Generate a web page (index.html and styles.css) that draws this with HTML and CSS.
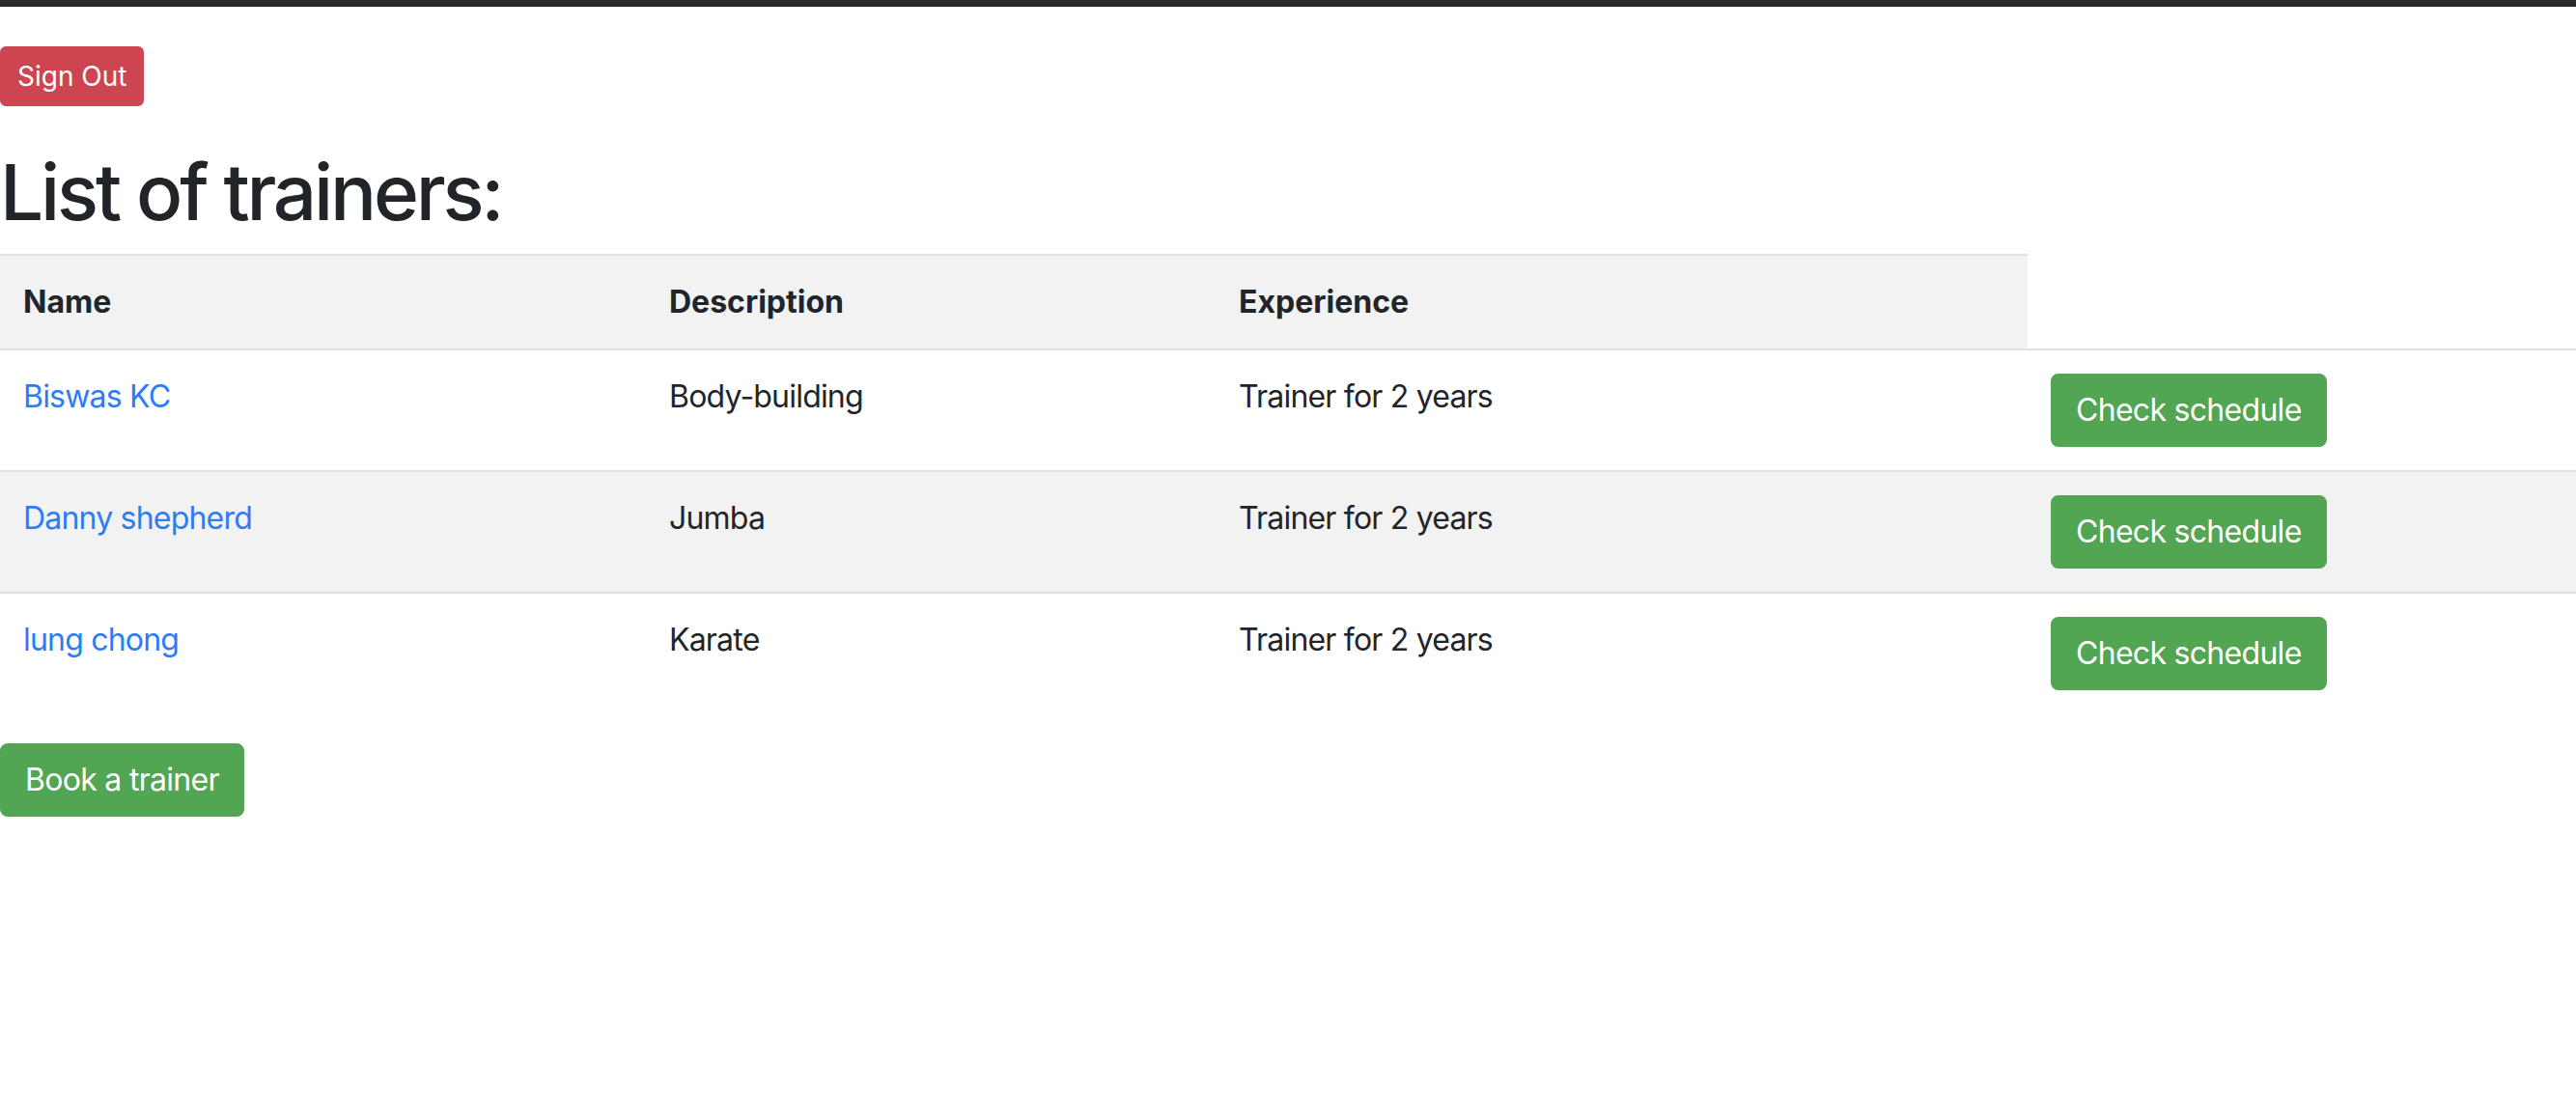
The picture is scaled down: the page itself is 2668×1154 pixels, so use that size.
FILE: index.html
```html
<!DOCTYPE html>
<html lang="en">
<head>
<meta charset="utf-8">
<title>Trainers</title>
<link rel="stylesheet" href="styles.css">
</head>
<body>
<div class="top-bar"></div>
<div class="actions">
  <button class="btn btn-danger btn-sm">Sign Out</button>
</div>
<h1 class="title">List of trainers:</h1>
<table class="table">
  <colgroup>
    <col class="col-name">
    <col class="col-desc">
    <col class="col-exp">
    <col class="col-action">
  </colgroup>
  <tr class="striped">
    <th>Name</th>
    <th>Description</th>
    <th>Experience</th>
  </tr>
  <tr>
    <td><a href="#" class="link">Biswas KC</a></td>
    <td>Body-building</td>
    <td>Trainer for 2 years</td>
    <td><button class="btn btn-success">Check schedule</button></td>
  </tr>
  <tr class="striped">
    <td><a href="#" class="link">Danny shepherd</a></td>
    <td>Jumba</td>
    <td>Trainer for 2 years</td>
    <td><button class="btn btn-success">Check schedule</button></td>
  </tr>
  <tr>
    <td><a href="#" class="link">lung chong</a></td>
    <td>Karate</td>
    <td>Trainer for 2 years</td>
    <td><button class="btn btn-success">Check schedule</button></td>
  </tr>
</table>
<div class="footer-actions">
  <button class="btn btn-success">Book a trainer</button>
</div>
</body>
</html>
```
FILE: styles.css
```css
html, body {
  margin: 0;
  padding: 0;
  background: #ffffff;
}
body {
  font-family: Inter, "Liberation Sans", sans-serif;
  font-size: 32px;
  line-height: 48px;
  color: #212529;
}
.top-bar {
  height: 7px;
  background: #2b2b2b;
}
.actions {
  display: flex;
  margin-top: 41px;
}
.btn {
  font-family: inherit;
  display: inline-block;
  border: 2px solid transparent;
  color: #ffffff;
  cursor: pointer;
  margin: 0;
}
.btn-sm {
  font-size: 28px;
  line-height: 42px;
  padding: 8px 16px;
  border-radius: 6px;
}
.btn-danger {
  background: #cd4550;
  border-color: #cd4550;
}
.btn-success {
  background: #52a552;
  border-color: #52a552;
  font-size: 32px;
  line-height: 48px;
  padding: 12px 24px;
  border-radius: 8px;
  letter-spacing: -0.022em;
}
.title {
  font-size: 80px;
  line-height: 96px;
  font-weight: 500;
  letter-spacing: -0.04em;
  margin: 41px 0 16px;
  color: #212529;
}
.table {
  width: 100%;
  border-collapse: collapse;
  table-layout: fixed;
  margin-bottom: 31px;
}
.col-name { width: 669px; }
.col-desc { width: 590px; }
.col-exp { width: 841px; }
.table th,
.table td {
  padding: 24px;
  border-top: 2px solid #dee2e6;
  vertical-align: top;
  text-align: left;
}
.table th {
  font-weight: 700;
}
.table td {
  letter-spacing: -0.025em;
}
.striped th,
.striped td {
  background: #f2f2f2;
}
.link {
  color: #2c7cf6;
  text-decoration: none;
}
.footer-actions {
  display: flex;
}
```
